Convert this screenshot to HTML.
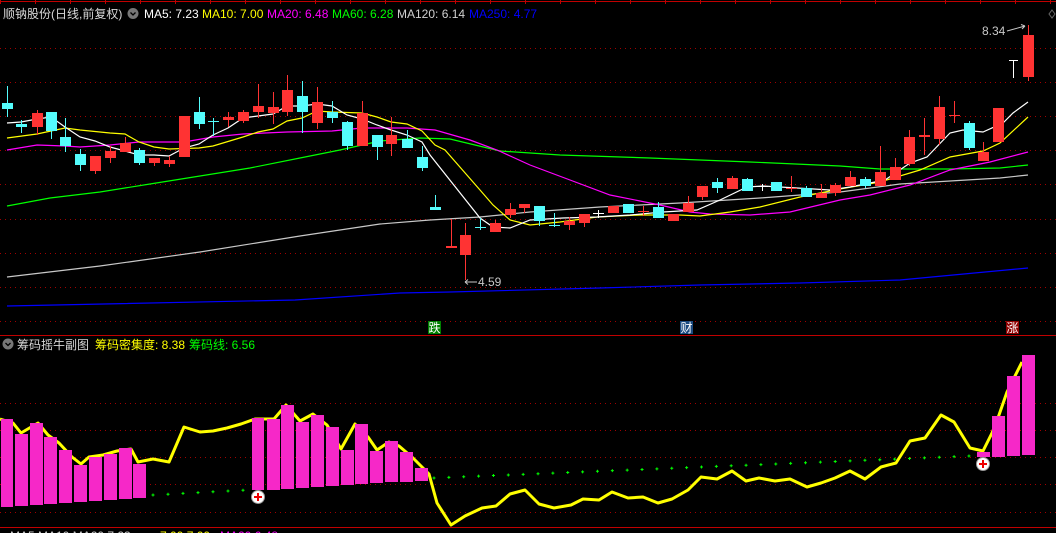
<!DOCTYPE html>
<html><head><meta charset="utf-8"><style>
html,body{margin:0;padding:0;background:#000;width:1056px;height:533px;overflow:hidden}
svg{display:block}
text{font-family:"Liberation Sans","Noto Sans CJK SC",sans-serif;font-size:12px}
</style></head><body>
<svg id="s" width="1056" height="533" viewBox="0 0 1056 533" xmlns="http://www.w3.org/2000/svg">
<rect width="1056" height="533" fill="#000"/>
<g id="grid" stroke="#a00000" stroke-width="1" stroke-dasharray="1 4"></g>
<line x1="0" y1="1.5" x2="1056" y2="1.5" stroke="#c00000"/>
<g id="ticks" stroke="#c00000"></g>
<line x1="0" y1="335.5" x2="1056" y2="335.5" stroke="#c00000"/>
<line x1="0" y1="527.5" x2="1056" y2="527.5" stroke="#c00000"/>
<g id="ma" fill="none" stroke-width="1.2"></g>
<g id="cd"></g>
<g id="low"></g>
<text x="3" y="18" fill="#d8d8d8" font-size="13">顺钠股份(日线,前复权)</text>
<circle cx="133" cy="13.5" r="5.5" fill="#777"/>
<path d="M130.5 12.5 L133 15 L135.5 12.5" stroke="#000" stroke-width="1.3" fill="none"/>
<text x="144" y="18" fill="#fff">MA5: 7.23</text>
<text x="202" y="18" fill="#ffff00">MA10: 7.00</text>
<text x="267" y="18" fill="#ff00ff">MA20: 6.48</text>
<text x="332" y="18" fill="#00ff00">MA60: 6.28</text>
<text x="397" y="18" fill="#d0d0d0">MA120: 6.14</text>
<text x="469" y="18" fill="#0000ff">MA250: 4.77</text>
<circle cx="8" cy="344" r="5.5" fill="#777"/>
<path d="M5.5 343 L8 345.5 L10.5 343" stroke="#000" stroke-width="1.3" fill="none"/>
<text x="17" y="349" fill="#d8d8d8" font-size="13">筹码摇牛副图</text>
<text x="95" y="349" fill="#ffff00">筹码密集度: 8.38</text>
<text x="189" y="349" fill="#00ff00">筹码线: 6.56</text>
<text x="478" y="286" fill="#c8c8c8">4.59</text>
<path d="M465 282 H477 M465 282 l3 -2.5 M465 282 l3 2.5" stroke="#c8c8c8" fill="none"/>
<text x="982" y="35" fill="#c8c8c8">8.34</text>
<path d="M1007 31 L1025 26 M1025 26 l-4 -1.5 M1025 26 l-3 3" stroke="#c8c8c8" fill="none"/>
<path d="M1052 10 l3 4 l-3 4 l-3 -4z" stroke="#666" fill="none"/>
<rect x="428" y="321" width="13" height="13" fill="#008000"/><text x="428.5" y="332" fill="#fff" font-size="12">跌</text>
<rect x="680" y="321" width="13" height="13" fill="#1a4a80"/><text x="680.5" y="332" fill="#fff" font-size="12">财</text>
<rect x="1006" y="321" width="13" height="13" fill="#900000"/><text x="1006.5" y="332" fill="#fff" font-size="12">涨</text>
<text x="10" y="540" fill="#ccc">MA5 MA10 MA20 7.23</text>
<text x="160" y="540" fill="#ffff00">7.00 7.00</text>
<text x="220" y="540" fill="#ff00ff">MA20 6.48</text>
</svg>
<script>
var NS="http://www.w3.org/2000/svg";
function el(p,t,a){var e=document.createElementNS(NS,t);for(var k in a)e.setAttribute(k,a[k]);document.getElementById(p).appendChild(e);return e;}
[48,82,116,150,184,219,253,287,321,403,430,457,484,512].forEach(function(y){el('grid','line',{x1:0,x2:1056,y1:y+.5,y2:y+.5});});
for(var x=0;x<1056;x+=35)el('ticks','line',{x1:x+.5,x2:x+.5,y1:0,y2:4});
function pl(c,pts,w){el('ma','polyline',{points:pts,stroke:c,'stroke-width':w||1.2});}
pl('#0000ff','7,306 295,300 400,293 450,292 600,288 700,285 800,283 900,280 1028,268');
pl('#c8c8c8','7,277 100,266 200,252 300,236 380,224 430,220 480,217 530,212 600,207 680,203 760,198 840,192 900,184 1000,178 1028,175');
pl('#00ff00','7,206 50,198 100,192 150,184 200,176 250,168 300,158 340,150 380,141 420,138 450,139 500,151 560,155 650,158 750,162 840,166 880,169 950,169 1000,168 1028,165');
pl('#ff00ff','7,150 37,145 65,146 80,147 110,145 139,142 184,142 213,137 243,134 287,132 332,131 362,128 407,128 435,130 470,140 497,150 530,165 570,180 610,195 660,205 690,212 710,214 750,215 790,212 840,200 870,195 910,185 950,170 990,162 1028,152');
pl('#ffff00','7,138 37,134 51,131 65,128 80,130 110,133 125,134 139,142 154,147 169,149 199,148 213,146 243,137 258,132 273,129 287,121 302,118 317,111 332,112 362,113 377,117 391,122 407,124 422,131 435,145 445,150 480,190 493,205 510,220 530,225 560,222 597,217 640,215 680,215 700,216 730,212 760,207 800,197 840,189 880,182 920,170 950,157 983,151 1000,143 1028,117');
pl('#ffffff','7,123 21,122 37,119 51,117 65,127 80,137 95,141 110,147 125,151 139,155 154,155 169,156 184,148 199,144 213,135 228,128 243,118 258,116 273,114 287,106 302,106 317,104 332,106 347,115 362,119 377,125 391,130 407,135 422,142 430,155 480,218 493,227 510,228 530,220 563,218 597,217 630,215 663,212 697,210 720,200 747,187 763,186 797,188 830,190 850,187 885,180 910,163 927,157 950,133 963,130 983,132 1003,123 1013,113 1028,102');
var C={r:'#ff3333',c:'#54fcfc',w:'#ffffff'};
var D=[[7,103,109,86,117,'c'],[21,124,127,120,133,'c'],[37,113,127,110,135,'r'],[51,112,131,112,139,'c'],[65,137,146,118,152,'c'],[80,154,165,149,171,'c'],[95,156,171,156,174,'r'],[110,151,158,146,163,'r'],[125,143,152,137,152,'r'],[139,150,163,148,165,'c'],[154,158,163,158,166,'r'],[169,160,164,156,167,'r'],[184,116,157,116,157,'r'],[199,112,124,97,129,'c'],[213,121,122,118,136,'c'],[228,117,120,112,127,'r'],[243,112,121,110,123,'r'],[258,106,112,84,118,'r'],[273,107,113,92,124,'r'],[287,90,112,75,116,'r'],[302,96,112,81,133,'c'],[317,102,123,87,129,'r'],[332,112,118,101,123,'c'],[347,122,146,121,150,'c'],[362,113,146,101,146,'r'],[377,135,147,135,160,'c'],[391,135,144,117,156,'r'],[407,139,148,130,148,'c'],[422,157,168,146,171,'c'],[435,207,210,195,210,'c'],[451,246,248,219,248,'r'],[465,235,255,223,280,'r'],[480,227,228,218,230,'c'],[495,223,232,220,232,'r'],[510,209,215,203,218,'r'],[524,204,208,204,213,'r'],[539,206,221,206,226,'c'],[554,225,226,213,227,'c'],[569,221,225,217,230,'r'],[584,214,223,214,227,'r'],[598,213,214,210,218,'w'],[613,206,213,206,213,'r'],[628,204,213,204,213,'c'],[643,211,212,206,216,'r'],[658,207,218,202,218,'c'],[673,214,221,214,221,'r'],[688,203,212,196,212,'r'],[702,186,197,186,200,'r'],[717,182,188,178,193,'c'],[732,178,189,176,189,'r'],[747,179,191,178,191,'c'],[762,186,187,184,191,'w'],[776,182,191,182,191,'c'],[791,188,189,176,192,'r'],[806,188,197,186,197,'c'],[821,193,198,184,198,'r'],[835,185,193,183,196,'r'],[850,177,186,171,186,'r'],[865,179,186,177,188,'c'],[880,172,186,146,186,'r'],[895,167,180,158,180,'r'],[909,137,164,130,166,'r'],[924,135,137,118,155,'r'],[939,107,139,96,145,'r'],[954,115,116,101,123,'r'],[969,123,148,121,150,'c'],[983,152,161,142,161,'r'],[998,108,142,108,142,'r'],[1013,60,61,60,78,'w'],[1028,35,77,25,81,'r']];
D.forEach(function(d){var c=C[d[5]];
 el('cd','rect',{x:d[0],y:d[3],width:1,height:d[4]-d[3],fill:c});
 var h=Math.max(1,d[2]-d[1]);var w=d[5]=='w'&&d[0]==1013?9:11;
 el('cd','rect',{x:d[0]-Math.floor(w/2),y:d[1],width:w,height:h,fill:c});});
el('low','polyline',{points:'0,419 13,423 21,433 38,423 48,435 59,443 72,457 81,464 89,457 103,455 117,451 131,449 138,462 153,459 169,462 184,427 200,432 213,431 227,428 241,424 255,419 274,419 286,405 300,421 313,414 327,425 341,449 355,424 368,437 377,450 389,442 399,446 413,458 429,474 437,503 451,525 465,516 482,508 496,506 510,494 525,490 539,504 554,508 571,505 583,499 599,500 612,492 628,498 643,497 658,503 672,499 688,490 701,477 717,479 732,471 746,481 759,478 775,481 790,479 807,487 821,483 835,478 850,471 865,479 881,467 896,463 910,441 925,438 941,415 954,422 970,448 983,451 992,433 999,415 1007,392 1014,378 1022,362',fill:'none',stroke:'#ffff00','stroke-width':3,'stroke-linejoin':'round'});
var B=[[1,13,419,507],[15,28,434,506],[30,43,423,505],[44,57,437,504],[59,72,450,503],[74,87,465,502],[89,102,457,501],[104,117,454,500],[119,132,448,499],[133,146,464,498],
[252,264,418,490],[267,280,419,490],[281,294,405,489],[296,309,422,488],[311,324,415,487],[326,339,427,486],[341,354,450,485],[355,368,424,484],[370,383,451,483],[385,398,441,482],[400,413,452,482],[415,428,468,481],
[977,990,452,457],[992,1005,416,457],[1007,1020,376,456],[1022,1035,355,455]];
B.forEach(function(b){el('low','rect',{x:b[0],y:b[2],width:b[1]-b[0],height:b[3]-b[2],fill:'#f628c8'});});
for(var x=153,i=0;x<=244;x+=15,i++){var y=495-i*0.8;dot(x,y);}
for(var x=434;x<=970;x+=14.86){var y=478-(x-434)*22/536;dot(x,y);}
function dot(x,y){el('low','path',{d:'M'+(x-1.5)+' '+y+'h3M'+x+' '+(y-1.5)+'v3',stroke:'#00ff00','stroke-width':1});}
function plus(x,y){el('low','circle',{cx:x,cy:y,r:6.5,fill:'#fff',stroke:'#999'});el('low','path',{d:'M'+(x-4)+' '+y+'h8M'+x+' '+(y-4)+'v8',stroke:'#ee0000','stroke-width':2});}
plus(258,497);plus(983,464);
</script>
</body></html>
